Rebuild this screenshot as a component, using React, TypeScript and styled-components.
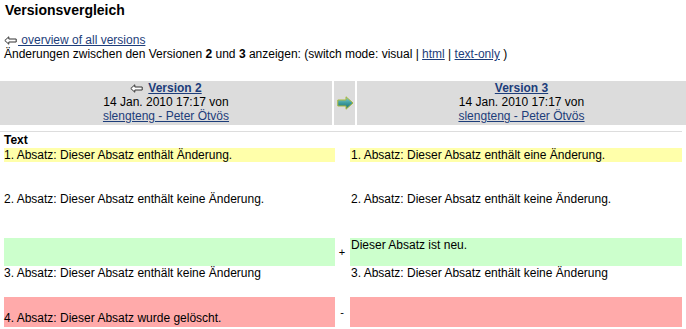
import { createGlobalStyle, styled } from "styled-components"

const GlobalStyle = createGlobalStyle`
    html, body {
        margin: 0;
        padding: 0;
        background: #fff;
    }
    body {
        font-family: "Liberation Sans", Arial, Helvetica, sans-serif;
        font-size: 12px;
        line-height: 14px;
        color: #000;
    }
`

const Page = styled.div`
    width: 686px;
    padding-top: 2px;
`

const Title = styled.h1`
    margin: 0 0 0 5px;
    font-size: 14px;
    line-height: 17px;
    font-weight: bold;
`

const Intro = styled.div`
    padding: 14px 0 0 4px;
`

const Line = styled.div`
    display: flex;
    align-items: center;
    height: 14px;
    white-space: pre;
`

const Link = styled.a`
    color: #1d3d7a;
    text-decoration: underline;
    cursor: pointer;
`

const BoldLink = styled(Link)`
    font-weight: bold;
`

const Bar = styled.div`
    display: grid;
    grid-template-columns: 332px 21px 1fr;
    column-gap: 2px;
    margin-top: 20px;
    background: #fff;
`

const BarCell = styled.div`
    background: #dcdcdc;
    height: 44px;
    display: flex;
    flex-direction: column;
    align-items: center;
    justify-content: flex-start;
    text-align: center;
`

const MidCell = styled(BarCell)`
    justify-content: center;
    padding-left: 1px;
`

const Rule = styled.div`
    width: 682px;
    height: 1px;
    margin-top: 6px;
    background: #dddddd;
`

const Section = styled.div`
    padding: 1px 0 0 4px;
    font-weight: bold;
    height: 15px;
`

const Diff = styled.div`
    display: grid;
    grid-template-columns: 331px 15px 332px;
    padding-left: 4px;
`

type Kind = "change" | "same" | "add" | "del"

const colors: Record<Kind, string> = {
    change: "#ffffaa",
    same: "transparent",
    add: "#ccffcc",
    del: "#ffaaaa",
}

const Cell = styled.div<{ $kind: Kind; $h: number; $pad: number }>`
    background: ${(p) => colors[p.$kind]};
    height: ${(p) => p.$h}px;
    padding-top: ${(p) => p.$pad}px;
    box-sizing: border-box;
    white-space: nowrap;
`

const RightCell = styled(Cell)`
    padding-left: 1px;
`

const Marker = styled.div`
    display: flex;
    align-items: center;
    justify-content: center;
    padding-right: 1px;
    font-size: 11px;
`

const ArrowBox = styled.span<{ $gap: number }>`
    display: inline-flex;
    margin-right: ${(p) => p.$gap}px;
`

const BackArrow = ({ gap }: { gap: number }) => (
    <ArrowBox $gap={gap}>
        <svg width="13" height="9" viewBox="0 0 13 9">
            <path d="M0.8 4.5 L4.8 0.8 L4.8 3 L12.2 3 L12.2 6 L4.8 6 L4.8 8.2 Z" fill="#fff" stroke="#333" strokeWidth="1" />
        </svg>
    </ArrowBox>
)

const NextArrow = () => (
    <svg width="17" height="14" viewBox="0 0 17 14">
        <defs>
            <linearGradient id="teal" x1="0" y1="0" x2="0" y2="1">
                <stop offset="0" stopColor="#8fd3d3" />
                <stop offset="0.5" stopColor="#3c9c9f" />
                <stop offset="1" stopColor="#226b70" />
            </linearGradient>
        </defs>
        <path d="M0.8 4 L9 4 L9 0.8 L16 7 L9 13.2 L9 10 L0.8 10 Z" fill="url(#teal)" stroke="#a8b83a" strokeWidth="1" />
    </svg>
)

const rows: { kind: Kind; h: number; pad: number; left: string; right: string; mark?: string }[] = [
    { kind: "change", h: 14, pad: 0, left: "1. Absatz: Dieser Absatz enthält Änderung.", right: "1. Absatz: Dieser Absatz enthält eine Änderung." },
    { kind: "same", h: 76, pad: 30, left: "2. Absatz: Dieser Absatz enthält keine Änderung.", right: "2. Absatz: Dieser Absatz enthält keine Änderung." },
    { kind: "add", h: 28, pad: 0, left: "", right: "Dieser Absatz ist neu.", mark: "+" },
    { kind: "same", h: 31, pad: 0, left: "3. Absatz: Dieser Absatz enthält keine Änderung", right: "3. Absatz: Dieser Absatz enthält keine Änderung" },
    { kind: "del", h: 30, pad: 14, left: "4. Absatz: Dieser Absatz wurde gelöscht.", right: "", mark: "-" },
]

const App = () => {
    return (
        <>
            <GlobalStyle />
            <Page>
                <Title>Versionsvergleich</Title>
                <Intro>
                    <Line>
                        <BackArrow gap={1} />
                        <Link> overview of all versions</Link>
                    </Line>
                    <Line>
                        Änderungen zwischen den Versionen <b>2</b> und <b>3</b> anzeigen: (switch mode: visual | <Link>html</Link> | <Link>text-only</Link> )
                    </Line>
                </Intro>
                <Bar>
                    <BarCell>
                        <Line>
                            <BackArrow gap={5} />
                            <BoldLink>Version 2</BoldLink>
                        </Line>
                        <Line>14 Jan. 2010 17:17 von</Line>
                        <Line>
                            <Link>slengteng - Peter Ötvös</Link>
                        </Line>
                    </BarCell>
                    <MidCell>
                        <NextArrow />
                    </MidCell>
                    <BarCell>
                        <Line>
                            <BoldLink>Version 3</BoldLink>
                        </Line>
                        <Line>14 Jan. 2010 17:17 von</Line>
                        <Line>
                            <Link>slengteng - Peter Ötvös</Link>
                        </Line>
                    </BarCell>
                </Bar>
                <Rule />
                <Section>Text</Section>
                <Diff>
                    {rows.map((r, i) => (
                        <>
                            <Cell key={`l${i}`} $kind={r.kind} $h={r.h} $pad={r.pad}>{r.left}</Cell>
                            <Marker key={`m${i}`}>{r.mark}</Marker>
                            <RightCell key={`r${i}`} $kind={r.kind} $h={r.h} $pad={r.kind === "del" ? 0 : r.pad}>{r.right}</RightCell>
                        </>
                    ))}
                </Diff>
            </Page>
        </>
    )
}

export default App
